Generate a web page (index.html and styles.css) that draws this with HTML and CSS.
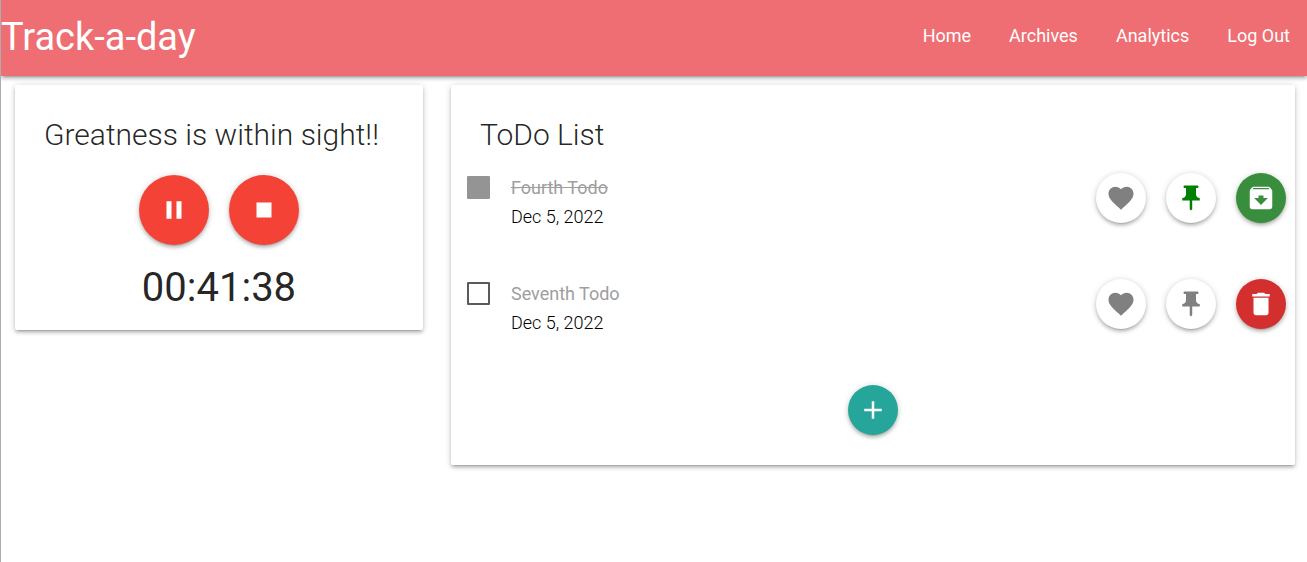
FILE: index.html
```html
<!DOCTYPE html>
<html lang="en">
<head>
<meta charset="utf-8">
<title>Track-a-day</title>
<link rel="stylesheet" href="styles.css">
</head>
<body>
<svg class="sprite" aria-hidden="true">
  <symbol id="heart" viewBox="0 0 24 24"><path d="M12 21.35l-1.45-1.32C5.4 15.36 2 12.28 2 8.5 2 5.42 4.42 3 7.5 3c1.74 0 3.41.81 4.5 2.09C13.09 3.81 14.76 3 16.5 3 19.58 3 22 5.42 22 8.5c0 3.78-3.4 6.86-8.55 11.54L12 21.35z"/></symbol>
  <symbol id="pin" viewBox="0 0 24 24"><path d="M16 9V4h1c.55 0 1-.45 1-1s-.45-1-1-1H7c-.55 0-1 .45-1 1s.45 1 1 1h1v5c0 1.66-1.34 3-3 3v2h5.97v7l1 1 1-1v-7H19v-2c-1.66 0-3-1.34-3-3z"/></symbol>
  <symbol id="archive" viewBox="0 0 24 24"><path d="M20.54 5.23l-1.39-1.68C18.88 3.21 18.47 3 18 3H6c-.47 0-.88.21-1.16.55L3.46 5.23C3.17 5.57 3 6.02 3 6.5V19c0 1.1.9 2 2 2h14c1.1 0 2-.9 2-2V6.5c0-.48-.17-.93-.46-1.27zM12 17.5L6.5 12H10v-2h4v2h3.5L12 17.5zM5.12 5l.81-1h12l.94 1H5.12z"/></symbol>
  <symbol id="trash" viewBox="0 0 24 24"><path d="M6 19c0 1.1.9 2 2 2h8c1.1 0 2-.9 2-2V7H6v12zM19 4h-3.5l-1-1h-5l-1 1H5v2h14V4z"/></symbol>
  <symbol id="plus" viewBox="0 0 24 24"><path d="M19 13h-6v6h-2v-6H5v-2h6V5h2v6h6v2z"/></symbol>
  <symbol id="pause" viewBox="0 0 24 24"><path d="M6 19h4V5H6v14zm8-14v14h4V5h-4z"/></symbol>
  <symbol id="stop" viewBox="0 0 24 24"><path d="M6 6h12v12H6z"/></symbol>
</svg>
<header class="navbar">
  <a class="brand" href="#">Track-a-day</a>
  <nav class="links">
    <a href="#">Home</a>
    <a href="#">Archives</a>
    <a href="#">Analytics</a>
    <a href="#">Log Out</a>
  </nav>
</header>
<main class="layout">
  <section class="card timer">
    <h1 class="title">Greatness is within sight!!</h1>
    <div class="controls">
      <button class="round large red" type="button" aria-label="Pause"><svg class="icon"><use href="#pause"/></svg></button>
      <button class="round large red" type="button" aria-label="Stop"><svg class="icon"><use href="#stop"/></svg></button>
    </div>
    <div class="clock">00:41:38</div>
  </section>
  <section class="card todos">
    <h2 class="title">ToDo List</h2>
    <ul class="list">
      <li class="item">
        <input class="check" type="checkbox" id="todo-4" checked disabled>
        <div class="text">
          <label class="name done" for="todo-4">Fourth Todo</label>
          <time class="date" datetime="2022-12-05">Dec 5, 2022</time>
        </div>
        <div class="actions">
          <button class="round plain" type="button" aria-label="Favorite"><svg class="icon"><use href="#heart"/></svg></button>
          <button class="round plain pinned" type="button" aria-label="Unpin"><svg class="icon"><use href="#pin"/></svg></button>
          <button class="round green" type="button" aria-label="Archive"><svg class="icon"><use href="#archive"/></svg></button>
        </div>
      </li>
      <li class="item">
        <input class="check" type="checkbox" id="todo-7">
        <div class="text">
          <label class="name" for="todo-7">Seventh Todo</label>
          <time class="date" datetime="2022-12-05">Dec 5, 2022</time>
        </div>
        <div class="actions">
          <button class="round plain" type="button" aria-label="Favorite"><svg class="icon"><use href="#heart"/></svg></button>
          <button class="round plain" type="button" aria-label="Pin"><svg class="icon"><use href="#pin"/></svg></button>
          <button class="round crimson" type="button" aria-label="Delete"><svg class="icon"><use href="#trash"/></svg></button>
        </div>
      </li>
    </ul>
    <div class="add"><button class="round teal" type="button" aria-label="Add todo"><svg class="icon"><use href="#plus"/></svg></button></div>
  </section>
</main>
</body>
</html>
```
FILE: styles.css
```css
* { box-sizing: border-box; }
body {
  margin: 0;
  min-height: 100vh;
  border-left: 1px solid #adadad;
  background: #fff;
  color: rgba(0, 0, 0, 0.87);
  font-family: Roboto, "Liberation Sans", sans-serif;
  font-size: 18px;
  line-height: 29px;
}
.sprite { display: none; }
.navbar,
.card,
.round {
  box-shadow: 0 3px 3px rgba(0, 0, 0, 0.14), 0 4px 1px -3px rgba(0, 0, 0, 0.12), 0 1px 6px rgba(0, 0, 0, 0.2);
}
.navbar {
  display: flex;
  align-items: center;
  justify-content: space-between;
  padding-bottom: 2px;
  background: #ee6e73;
}
.navbar a { color: #fff; text-decoration: none; }
.navbar .brand { font-size: 38px; line-height: 74px; }
.links { display: flex; gap: 38px; padding: 0 17px 4px 0; }
.layout {
  display: grid;
  grid-template-columns: 29fr 60fr;
  align-items: start;
  gap: 28px;
  padding: 9px 12px 20px 14px;
}
.card {
  border-radius: 2px;
  background: #fff;
}
.title {
  margin: 0;
  padding: 32px 29px 0;
  font-size: 30px;
  font-weight: 300;
  line-height: 36px;
}
.controls {
  display: flex;
  justify-content: center;
  gap: 20px;
  margin-top: 22px;
}
.clock {
  padding: 18px 0;
  text-align: center;
  font-size: 40px;
  line-height: 49px;
}
.round {
  display: inline-flex;
  align-items: center;
  justify-content: center;
  width: 50px;
  height: 50px;
  padding: 0;
  border: 0;
  border-radius: 50%;
  color: #fff;
  cursor: pointer;
}
.large { width: 70px; height: 70px; }
.red { background: #f44336; }
.green { background: #388e3c; }
.crimson { background: #d32f2f; }
.teal { background: #26a69a; }
.plain { background: #fff; color: #808080; }
.pinned { color: #008000; }
.icon { width: 30px; height: 30px; fill: currentColor; }
.list { margin: 20px 0 0; padding: 0; list-style: none; }
.item {
  display: flex;
  align-items: flex-start;
  min-height: 106px;
  padding: 0 9px 0 16px;
}
.check {
  appearance: none;
  flex: none;
  width: 23px;
  height: 23px;
  margin: 3px 21px 0 0;
  border: 2px solid #5a5a5a;
  border-radius: 1px;
}
.check:checked { border: 0; background: #949494; }
.text { flex: 1; }
.name, .date { display: block; }
.name { color: #9e9e9e; }
.date { color: #000; font-weight: 300; }
.done { text-decoration: line-through; }
.actions { display: flex; gap: 20px; }
.add { display: flex; justify-content: center; padding-bottom: 30px; }
```
